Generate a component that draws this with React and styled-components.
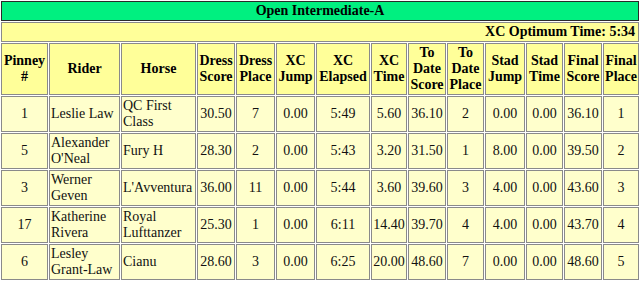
import React from "react";
import styled, { createGlobalStyle } from "styled-components";

const Global = createGlobalStyle`
  html, body { margin: 0; padding: 0; background: #ffffff; }
  body { font-family: "Liberation Serif", "Times New Roman", serif; font-size: 14px; }
`;

const Table = styled.table`
  width: 640px;
  table-layout: fixed;
  border-collapse: separate;
  border-spacing: 1px;
  font-family: "Liberation Serif", "Times New Roman", serif;
  font-size: 14px;
  line-height: 16px;
  color: #000;
`;

const TitleCell = styled.th`
  background: #00f080;
  border: 1px solid #2a2a2a;
  padding: 1px;
  text-align: center;
  font-weight: bold;
`;

const InfoCell = styled.th`
  background: #ffff99;
  border: 1px solid #8a8a8a;
  padding: 1px 3px 1px 1px;
  text-align: right;
  font-weight: bold;
`;

const HeadCell = styled.th`
  background: #ffff99;
  border: 1px solid #8a8a8a;
  padding: 1px;
  text-align: center;
  vertical-align: middle;
  font-weight: bold;
`;

const Cell = styled.td`
  background: #ffffcc;
  border: 1px solid #8a8a8a;
  padding: 1px;
  text-align: ${(p) => (p.$left ? "left" : "center")};
  vertical-align: middle;
  color: #111;
  height: 32px;
`;

const columns = [
  { label: ["Pinney", "#"], width: 47 },
  { label: ["Rider"], width: 71, left: true },
  { label: ["Horse"], width: 75, left: true },
  { label: ["Dress", "Score"], width: 38 },
  { label: ["Dress", "Place"], width: 39 },
  { label: ["XC", "Jump"], width: 39 },
  { label: ["XC", "Elapsed"], width: 54 },
  { label: ["XC", "Time"], width: 36 },
  { label: ["To", "Date", "Score"], width: 38 },
  { label: ["To", "Date", "Place"], width: 37 },
  { label: ["Stad", "Jump"], width: 40 },
  { label: ["Stad", "Time"], width: 37 },
  { label: ["Final", "Score"], width: 38 },
  { label: ["Final", "Place"], width: 36 },
];

const rows = [
  ["1", "Leslie Law", "QC First Class", "30.50", "7", "0.00", "5:49", "5.60", "36.10", "2", "0.00", "0.00", "36.10", "1"],
  ["5", "Alexander O'Neal", "Fury H", "28.30", "2", "0.00", "5:43", "3.20", "31.50", "1", "8.00", "0.00", "39.50", "2"],
  ["3", "Werner Geven", "L'Avventura", "36.00", "11", "0.00", "5:44", "3.60", "39.60", "3", "4.00", "0.00", "43.60", "3"],
  ["17", "Katherine Rivera", "Royal Lufttanzer", "25.30", "1", "0.00", "6:11", "14.40", "39.70", "4", "4.00", "0.00", "43.70", "4"],
  ["6", "Lesley Grant-Law", "Cianu", "28.60", "3", "0.00", "6:25", "20.00", "48.60", "7", "0.00", "0.00", "48.60", "5"],
];

export default function App() {
  return (
    <>
      <Global />
      <Table>
        <colgroup>
          {columns.map((c, i) => (
            <col key={i} style={{ width: c.width }} />
          ))}
        </colgroup>
        <thead>
          <tr>
            <TitleCell colSpan={14}>Open Intermediate-A</TitleCell>
          </tr>
          <tr>
            <InfoCell colSpan={14}>XC Optimum Time: 5:34</InfoCell>
          </tr>
          <tr>
            {columns.map((c, i) => (
              <HeadCell key={i}>
                {c.label.map((l, j) => (
                  <React.Fragment key={j}>
                    {j > 0 && <br />}
                    {l}
                  </React.Fragment>
                ))}
              </HeadCell>
            ))}
          </tr>
        </thead>
        <tbody>
          {rows.map((r, i) => (
            <tr key={i}>
              {r.map((v, j) => (
                <Cell key={j} $left={columns[j].left}>
                  {v}
                </Cell>
              ))}
            </tr>
          ))}
        </tbody>
      </Table>
    </>
  );
}
